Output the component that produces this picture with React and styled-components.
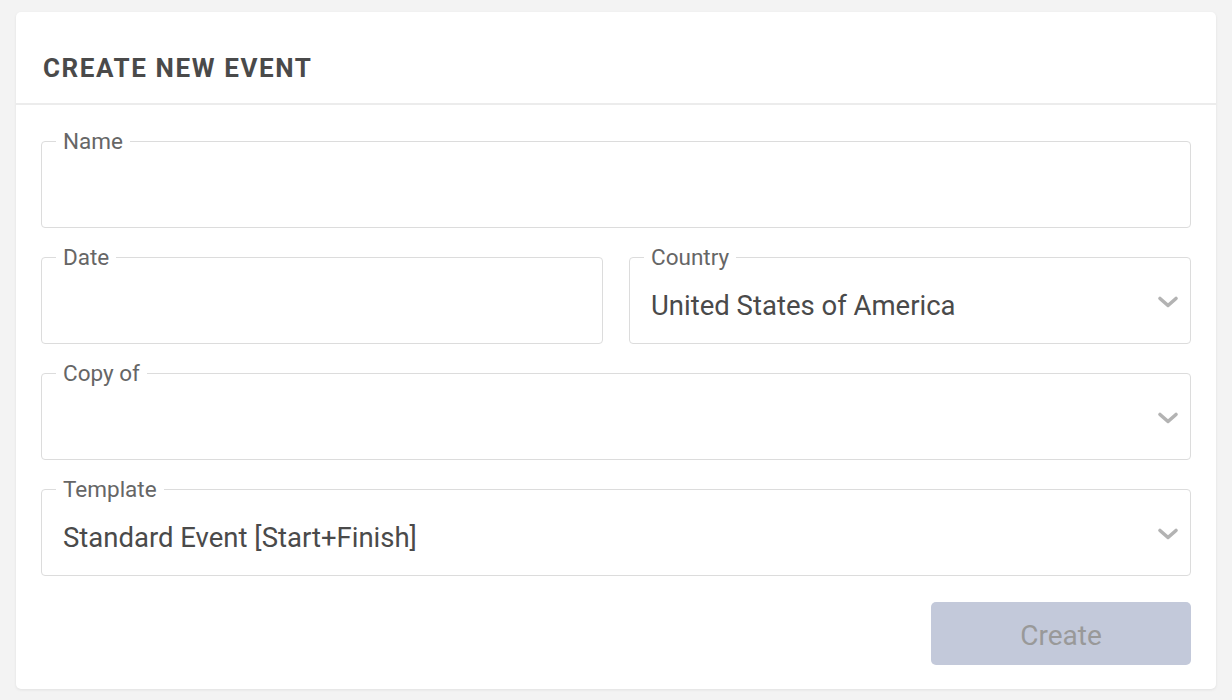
import React from "react";
import styled, { createGlobalStyle } from "styled-components";

const Global = createGlobalStyle`
  html, body {
    margin: 0;
    background: #f3f3f3;
  }
  body {
    padding: 12px 16px;
    font-family: Roboto, "Noto Sans", sans-serif;
    color: #4a4a4a;
  }
`;

const Card = styled.div`
  width: 1200px;
  background: #fff;
  border-radius: 5px;
  box-shadow: 0 1px 3px rgba(0, 0, 0, 0.08);
`;

const Header = styled.div`
  height: 93px;
  display: flex;
  align-items: center;
  padding: 0 27px;
  border-bottom: 2px solid #ececec;
  box-sizing: border-box;
`;

const Title = styled.h1`
  margin: 20px 0 0;
  font-size: 26px;
  font-weight: 700;
  letter-spacing: 1.6px;
  color: #4a4a4a;
`;

const Body = styled.div`
  padding: 24px 25px 24px;
  display: flex;
  flex-direction: column;
  gap: 17px;
`;

const Row = styled.div`
  display: grid;
  grid-template-columns: 1fr 1fr;
  gap: 26px;
`;

const Fieldset = styled.fieldset`
  margin: 0;
  padding: 0 11px 0 14px;
  min-width: 0;
  border: 1.5px solid #dcdcdc;
  border-radius: 4px;
`;

const Legend = styled.legend`
  padding: 0 7px;
  font-size: 22.5px;
  line-height: 24px;
  color: #666;
`;

const Control = styled.div`
  height: 74px;
  display: flex;
  align-items: center;
  justify-content: space-between;
  padding: 0 0 2px 7px;
  box-sizing: border-box;
  font-size: 27.5px;
  color: #4a4a4a;
`;

const ChevronSvg = styled.svg`
  margin-bottom: 7px;
`;

const Chevron = () => (
  <ChevronSvg width="22" height="14" viewBox="0 0 22 14">
    <path d="M3 3.5l8 7 8-7" fill="none" stroke="#b3b3b3" strokeWidth="3.6" strokeLinecap="round" strokeLinejoin="round" />
  </ChevronSvg>
);

const Field = ({ label, value, select }) => (
  <Fieldset>
    <Legend>{label}</Legend>
    <Control>
      <span>{value}</span>
      {select && <Chevron />}
    </Control>
  </Fieldset>
);

const Footer = styled.div`
  display: flex;
  justify-content: flex-end;
  padding-top: 9px;
`;

const Button = styled.button`
  width: 260px;
  height: 63px;
  padding-top: 4px;
  border: none;
  border-radius: 5px;
  background: #c3c9da;
  color: #999;
  font-family: inherit;
  font-size: 28px;
`;

export default function App() {
  return (
    <>
      <Global />
      <Card>
        <Header>
          <Title>CREATE NEW EVENT</Title>
        </Header>
        <Body>
          <Field label="Name" />
          <Row>
            <Field label="Date" />
            <Field label="Country" value="United States of America" select />
          </Row>
          <Field label="Copy of" select />
          <Field label="Template" value="Standard Event [Start+Finish]" select />
          <Footer>
            <Button disabled>Create</Button>
          </Footer>
        </Body>
      </Card>
    </>
  );
}
